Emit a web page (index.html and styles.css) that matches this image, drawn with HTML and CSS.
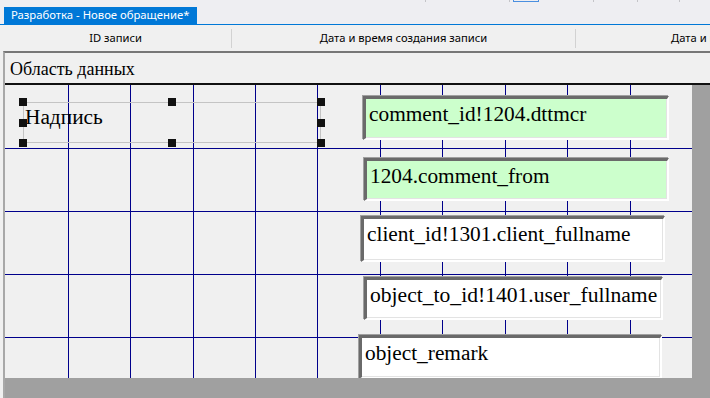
FILE: index.html
```html
<!DOCTYPE html>
<html lang="ru">
<head>
<meta charset="utf-8">
<title>Разработка - Новое обращение*</title>
<link rel="stylesheet" href="styles.css">
</head>
<body>
<div class="top-strip">
  <span class="tick t1"></span><span class="tick t2"></span><span class="sel-box"></span><span class="tick t3"></span><span class="tick t4"></span><span class="tick t5"></span>
</div>
<div class="tabbar">
  <div class="tab">Разработка - Новое обращение*</div>
</div>
<div class="grid-header">
  <div class="col c1">ID записи</div>
  <span class="sep"></span>
  <div class="col c2">Дата и время создания записи</div>
  <span class="sep"></span>
  <div class="col c3">Дата и время изменения записи</div>
</div>
<div class="workspace">
  <div class="band">Область данных</div>
  <div class="canvas-row">
    <div class="canvas">
      <svg class="gridlines" width="687" height="293" viewBox="0 0 687 293" shape-rendering="crispEdges">
        <g fill="#00008b">
          <rect x="63" y="0" width="1" height="293"/>
          <rect x="125" y="0" width="1" height="293"/>
          <rect x="188" y="0" width="1" height="293"/>
          <rect x="250" y="0" width="1" height="293"/>
          <rect x="312" y="0" width="1" height="293"/>
          <rect x="375" y="0" width="1" height="293"/>
          <rect x="437" y="0" width="1" height="293"/>
          <rect x="500" y="0" width="1" height="293"/>
          <rect x="562" y="0" width="1" height="293"/>
          <rect x="625" y="0" width="1" height="293"/>
          <rect x="0" y="63" width="687" height="1"/>
          <rect x="0" y="126" width="687" height="1"/>
          <rect x="0" y="189" width="687" height="1"/>
          <rect x="0" y="252" width="687" height="1"/>
        </g>
      </svg>
      <div class="label">
        <span class="label-text">Надпись</span>
        <span class="h h-tl"></span><span class="h h-tm"></span><span class="h h-tr"></span>
        <span class="h h-ml"></span><span class="h h-mr"></span>
        <span class="h h-bl"></span><span class="h h-bm"></span><span class="h h-br"></span>
      </div>
      <div class="field green f1">comment_id!1204.dttmcr</div>
      <div class="field green f2">1204.comment_from</div>
      <div class="field f3">client_id!1301.client_fullname</div>
      <div class="field f4">object_to_id!1401.user_fullname</div>
      <div class="field f5">object_remark</div>
    </div>
  </div>
</div>
</body>
</html>
```

FILE: styles.css
```css
html, body {
  margin: 0;
  padding: 0;
}
body {
  width: 710px;
  height: 398px;
  overflow: hidden;
  background: #f0f0f0;
  font-family: "Noto Sans", "Open Sans", sans-serif;
}

/* toolbar remnant at very top */
.top-strip {
  height: 7px;
  display: flex;
  align-items: flex-start;
  background: #eeeef2;
  overflow: hidden;
}
.tick {
  width: 1px;
  height: 2px;
  background: #c4c4c8;
  flex-shrink: 0;
}
.t1 { margin-left: 425px; }
.t2 { margin-left: 83px; }
.sel-box {
  width: 24px;
  height: 1px;
  margin-left: 3px;
  border: 1px solid #4a8fe0;
  border-top: 0;
  flex-shrink: 0;
}
.t3 { margin-left: 54px; }
.t4 { margin-left: 43px; }
.t5 { margin-left: 41px; }

/* document tab */
.tabbar {
  height: 17px;
  display: flex;
  background: #eeeef2;
  border-bottom: 1px solid #0078d7;
}
.tab {
  margin-left: 4px;
  width: 186px;
  padding-left: 7px;
  background: #0078d7;
  color: #fff;
  font-size: 11.3px;
  line-height: 16px;
  white-space: nowrap;
}

/* column header */
.grid-header {
  height: 26px;
  display: flex;
  align-items: center;
  white-space: nowrap;
  overflow: hidden;
  font-size: 11.2px;
  color: #000;
}
.col {
  flex-shrink: 0;
  text-align: center;
  line-height: 26px;
}
.c1 { width: 231px; }
.c2 { width: 343px; }
.c3 { width: 343px; padding-left: 12px; }
.sep {
  flex-shrink: 0;
  width: 1px;
  height: 19px;
  background: #d2d2d2;
}

/* design surface */
.workspace {
  margin-left: 3px;
  height: 345px;
  border-top: 2px solid #777;
  border-left: 2px solid #a8a8a8;
  background: #a0a0a0;
  display: flex;
  flex-direction: column;
}
.band {
  height: 27px;
  padding: 3px 0 0 5px;
  line-height: 27px;
  background: #f0f0f0;
  border-bottom: 2px solid #111;
  font-family: "Liberation Serif", "Times New Roman", serif;
  font-size: 18px;
  color: #000;
}
.canvas-row {
  display: flex;
}
.canvas {
  position: relative;
  width: 687px;
  height: 293px;
  background: #f0f0f0;
  overflow: hidden;
  flex-shrink: 0;
  font-family: "Liberation Serif", "Times New Roman", serif;
  font-size: 21.33px;
  color: #000;
}
.gridlines {
  position: absolute;
  left: 0;
  top: 0;
  display: block;
}

/* selected label control */
.label {
  position: absolute;
  left: 18px;
  top: 17px;
  width: 296px;
  height: 39px;
  border: 1px solid #c4c4c4;
}
.label-text {
  display: block;
  padding: 2px 0 0 1px;
  line-height: 24px;
  white-space: nowrap;
}
.h {
  position: absolute;
  width: 8px;
  height: 8px;
  background: #111;
}
.h-tl { left: -5px; top: -5px; }
.h-tm { left: 144px; top: -5px; }
.h-tr { right: -5px; top: -5px; }
.h-ml { left: -5px; top: 16px; }
.h-mr { right: -5px; top: 16px; }
.h-bl { left: -5px; bottom: -5px; }
.h-bm { left: 144px; bottom: -5px; }
.h-br { right: -5px; bottom: -5px; }

/* bound fields */
.field {
  position: absolute;
  box-sizing: border-box;
  background: #fff;
  border-style: solid;
  border-width: 3px 2px 2px 3px;
  border-color: #6a6a6a #fff #fff #6a6a6a;
  box-shadow: -1px -1px 0 #a0a0a0, inset -1px -1px 0 #e3e3e3;
  padding: 3px 0 0 3px;
  line-height: 24px;
  white-space: nowrap;
  overflow: hidden;
}
.green { background: #ccffcc; }
.f1 { left: 358px; top: 11px; width: 306px; height: 44px; }
.f2 { left: 359px; top: 73px; width: 305px; height: 43px; }
.f3 { left: 356px; top: 131px; width: 304px; height: 46px; }
.f4 { left: 359px; top: 192px; width: 299px; height: 43px; font-size: 21.6px; }
.f5 { left: 354px; top: 250px; width: 303px; height: 44px; }
```
